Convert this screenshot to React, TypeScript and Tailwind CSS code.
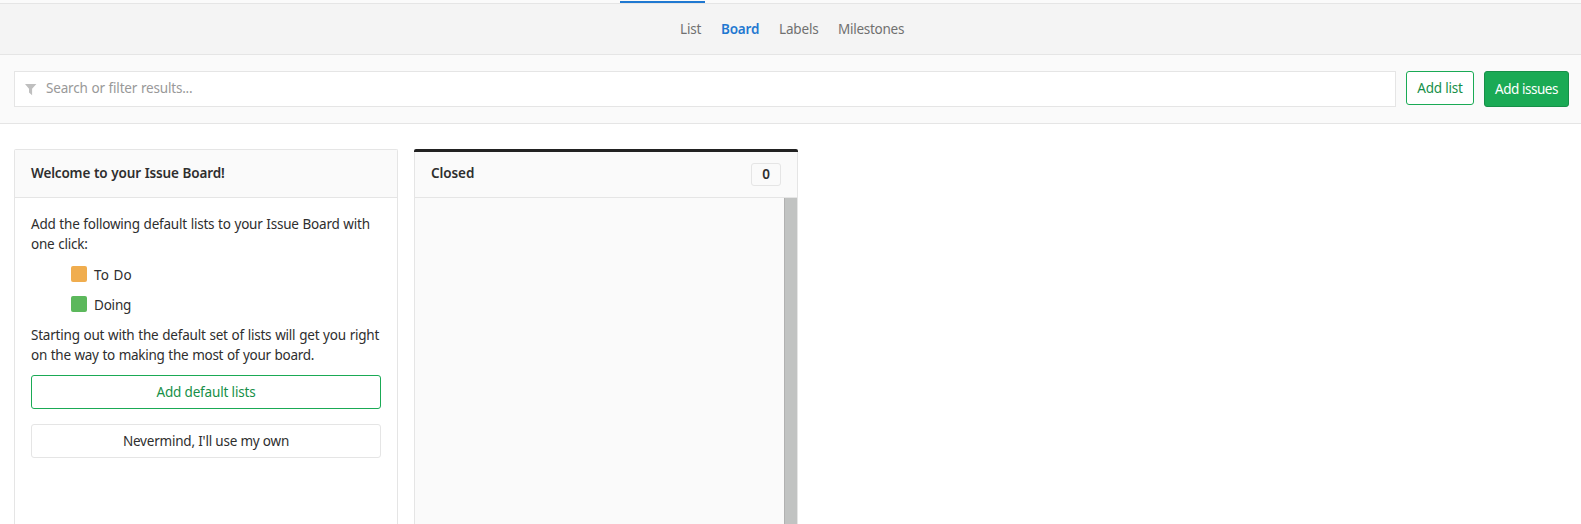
import React from "react";

const navItems = [
  { label: "List", cls: "text-[#707070] tracking-[-0.15px] w-[21px]" },
  { label: "Board", cls: "font-semibold text-[#1f78d1] tracking-[-0.2px] w-[38px]" },
  { label: "Labels", cls: "text-[#707070] tracking-[-0.17px] w-[39px]" },
  { label: "Milestones", cls: "text-[#707070] tracking-[-0.26px] w-[66px]" },
];

const defaultLists = [
  { label: "To Do", color: "bg-[#f0ad4e]", tracking: "tracking-[0.25px]" },
  { label: "Doing", color: "bg-[#5cb85c]", tracking: "tracking-[-0.21px]" },
];

function SubNav() {
  return (
    <header className="shrink-0">
      <div className="flex h-1 items-end justify-center border-b border-[#e5e5e5] bg-[#fafafa]">
        <div className="mr-[256px] h-0.5 w-[85px] bg-[#1f78d1]" />
      </div>
      <nav className="flex h-[51px] items-center border-b border-[#e5e5e5] bg-[#f4f4f4] pl-[680px]">
        {navItems.map((item) => (
          <a key={item.label} className={`mr-5 whitespace-nowrap ${item.cls}`}>
            {item.label}
          </a>
        ))}
      </nav>
    </header>
  );
}

function FilterBar() {
  return (
    <div className="flex h-[69px] shrink-0 items-start border-b border-[#e5e5e5] bg-[#fafafa] pt-4 pr-3 pl-3.5">
      <div className="flex h-9 w-[1382px] items-center border border-[#e5e5e5] bg-white pl-2.5">
        <svg width="12" height="12" viewBox="0 0 12 12" className="mt-0.5 mr-[9px] fill-[#bfbfbf]">
          <path d="M0 0h11.4L7.1 4.8v6.4L4 8.6V4.8z" />
        </svg>
        <span className="pb-0.5 tracking-[-0.19px] text-[#999]">Search or filter results...</span>
      </div>
      <button className="ml-2.5 h-[34px] w-[68px] rounded-[3px] border border-[#1aaa55] bg-white tracking-[-0.22px] whitespace-nowrap text-[#168f48]">
        Add list
      </button>
      <button className="ml-2.5 h-9 w-[85px] rounded-[3px] border border-[#168f48] bg-[#1aaa55] tracking-[-0.46px] whitespace-nowrap text-white">
        Add issues
      </button>
    </div>
  );
}

function WelcomeList() {
  return (
    <section className="flex w-96 flex-col rounded-t-[2px] border border-b-0 border-[#e5e5e5] bg-white">
      <h3 className="h-12 border-b border-[#e5e5e5] bg-[#fafafa] px-4 pt-[13px] font-semibold tracking-[-0.16px]">
        Welcome to your Issue Board!
      </h3>
      <div className="px-4 pt-4">
        <p className="tracking-[-0.22px] whitespace-nowrap">
          Add the following default lists to your Issue Board with
          <br />
          one click:
        </p>
        <ul className="pt-[11px] pl-10">
          {defaultLists.map((list) => (
            <li key={list.label} className={`mb-2.5 flex h-5 ${list.tracking}`}>
              <span className={`mt-px mr-[7px] size-4 rounded-[2px] ${list.color}`} />
              {list.label}
            </li>
          ))}
        </ul>
        <p className="whitespace-nowrap">
          <span className="tracking-[-0.215px]">
            Starting out with the default set of lists will get you right
          </span>
          <br />
          <span className="tracking-[-0.27px]">on the way to making the most of your board.</span>
        </p>
        <button className="mt-2.5 block h-[34px] w-full rounded-[3px] border border-[#1aaa55] tracking-[-0.16px] text-[#168f48]">
          Add default lists
        </button>
        <button className="mt-[15px] block h-[34px] w-full rounded-[3px] border border-[#e5e5e5] tracking-[-0.2px]">
          Nevermind, I'll use my own
        </button>
      </div>
    </section>
  );
}

function ClosedList() {
  return (
    <section className="flex w-96 flex-col">
      <div className="h-[3px] shrink-0 rounded-t-[2px] bg-[#222]" />
      <div className="flex flex-1 flex-col border-x border-[#e5e5e5] bg-[#fafafa]">
        <h3 className="flex h-[46px] items-start justify-between border-b border-[#e5e5e5] px-4 pt-[11px] font-semibold">
          <span className="tracking-[-0.08px]">Closed</span>
          <span className="flex h-[23px] w-[30px] items-center justify-center rounded-[3px] border border-[#e5e5e5] pb-px">
            0
          </span>
        </h3>
        <div className="flex flex-1 justify-end">
          <div className="w-[13px] border-l border-[#b1b1b1] bg-[#c1c3c2]" />
        </div>
      </div>
    </section>
  );
}

export default function App() {
  return (
    <div className="flex h-[524px] w-[1581px] flex-col overflow-hidden bg-white font-['Noto_Sans',sans-serif] text-[13.5px] leading-5 text-[#2e2e2e] [word-spacing:0.5px]">
      <SubNav />
      <FilterBar />
      <main className="flex flex-1 gap-4 pt-[25px] pl-3.5">
        <WelcomeList />
        <ClosedList />
      </main>
    </div>
  );
}
